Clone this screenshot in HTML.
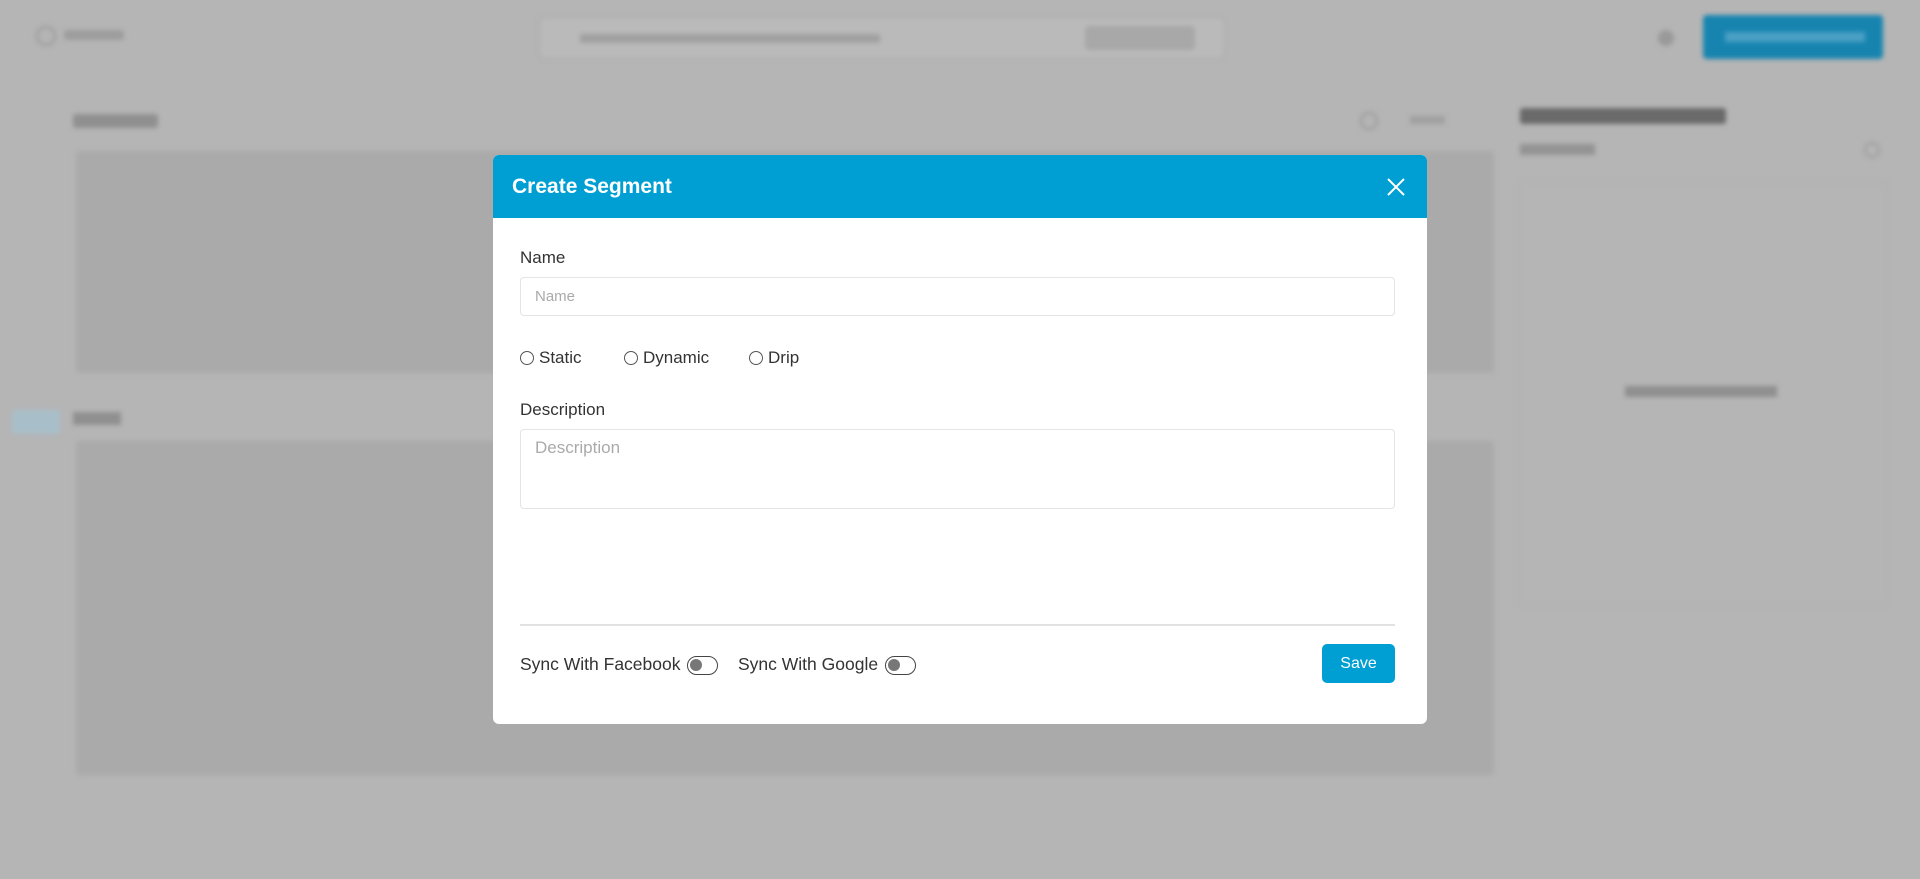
<!DOCTYPE html>
<html><head><style>
*{box-sizing:border-box;margin:0;padding:0}
body{width:1920px;height:879px;overflow:hidden;background:#b5b5b5;font-family:"Liberation Sans",sans-serif;position:relative}
.bg{position:absolute;inset:0;filter:blur(2.5px)}
.a{position:absolute}
.modal{position:absolute;left:493px;top:155px;width:934px;height:569px;background:#fff;border-radius:6px;overflow:hidden}
.hd{height:63px;background:#009fd3;color:#fff;font-weight:bold;font-size:21px;padding:0 0 0 19px;line-height:63px;position:relative}
.lbl{position:absolute;left:27px;font-size:17px;color:#333}
.inp{position:absolute;left:27px;width:875px;border:1px solid #e4e4e4;border-radius:4px;color:#aaa;font-size:15px;padding-left:14px}
.radio{position:absolute;top:193px;font-size:17px;color:#333;display:flex;align-items:center}
.radio i{display:inline-block;width:14px;height:14px;border:1px solid #555;border-radius:50%;margin-right:5px}
.tog{display:inline-block;width:31px;height:19px;border:1.5px solid #444;border-radius:10px;position:relative;vertical-align:middle;margin-left:7px}
.tog:after{content:"";position:absolute;left:2px;top:2px;width:12px;height:12px;border-radius:50%;background:#777}
</style></head><body>
<div class="bg">
 <div class="a" style="left:36px;top:26px;width:20px;height:20px;border:2px solid #999;border-radius:50%"></div>
 <div class="a" style="left:64px;top:30px;width:60px;height:10px;background:#9d9d9d;border-radius:3px"></div>
 <div class="a" style="left:539px;top:17px;width:686px;height:42px;background:#bababa;border:1px solid #a8a8a8;border-radius:6px"></div>
 <div class="a" style="left:580px;top:34px;width:300px;height:9px;background:#a0a0a0"></div>
 <div class="a" style="left:1085px;top:26px;width:110px;height:24px;background:#a8a8a8;border-radius:4px"></div>
 <div class="a" style="left:1658px;top:30px;width:16px;height:16px;background:#999;border-radius:50%"></div>
 <div class="a" style="left:1703px;top:15px;width:180px;height:44px;background:#1784b0;border-radius:4px"></div>
 <div class="a" style="left:1725px;top:32px;width:140px;height:10px;background:#4aa0c4"></div>
 <div class="a" style="left:73px;top:114px;width:85px;height:14px;background:#909090;border-radius:3px"></div>
 <div class="a" style="left:1360px;top:112px;width:18px;height:18px;border:2px solid #999;border-radius:50%"></div>
 <div class="a" style="left:1410px;top:116px;width:35px;height:8px;background:#a0a0a0"></div>
 <div class="a" style="left:76px;top:151px;width:1418px;height:222px;background:#aaaaaa;border-radius:4px"></div>
 <div class="a" style="left:12px;top:410px;width:48px;height:24px;background:#a8bfc9;border-radius:3px"></div>
 <div class="a" style="left:73px;top:412px;width:48px;height:13px;background:#909090"></div>
 <div class="a" style="left:76px;top:441px;width:1418px;height:334px;background:#aaaaaa;border-radius:4px"></div>
 <div class="a" style="left:1520px;top:108px;width:206px;height:16px;background:#6a6a6a;border-radius:3px"></div>
 <div class="a" style="left:1520px;top:144px;width:75px;height:11px;background:#939393"></div>
 <div class="a" style="left:1864px;top:142px;width:16px;height:16px;border:2px solid #9c9c9c;border-radius:50%"></div>
 <div class="a" style="left:1518px;top:180px;width:370px;height:425px;border:1px solid #adadad;border-radius:4px"></div>
 <div class="a" style="left:1625px;top:386px;width:152px;height:11px;background:#8f8f8f"></div>
</div>
<div class="modal">
 <div class="hd">Create Segment
  <svg class="a" style="right:22px;top:23px" width="18" height="18" viewBox="0 0 18 18"><path d="M1 1L17 17M17 1L1 17" stroke="#fff" stroke-width="2"/></svg>
 </div>
 <div class="lbl" style="top:93px">Name</div>
 <div class="inp" style="top:122px;height:39px;line-height:37px">Name</div>
 <div class="radio" style="left:27px"><i></i>Static</div>
 <div class="radio" style="left:131px"><i></i>Dynamic</div>
 <div class="radio" style="left:256px"><i></i>Drip</div>
 <div class="lbl" style="top:245px">Description</div>
 <div class="inp" style="top:274px;height:80px;padding-top:8px;font-size:17px">Description</div>
 <div class="a" style="left:27px;top:469px;width:875px;height:2px;background:#e2e2e2"></div>
 <div class="a" style="left:27px;top:499px;font-size:17.5px;color:#333">Sync With Facebook<span class="tog"></span></div>
 <div class="a" style="left:245px;top:499px;font-size:17.5px;color:#333">Sync With Google<span class="tog"></span></div>
 <div class="a" style="left:829px;top:489px;width:73px;height:39px;background:#009fd3;color:#fff;border-radius:5px;font-size:16px;text-align:center;line-height:39px">Save</div>
</div>
</body></html>
